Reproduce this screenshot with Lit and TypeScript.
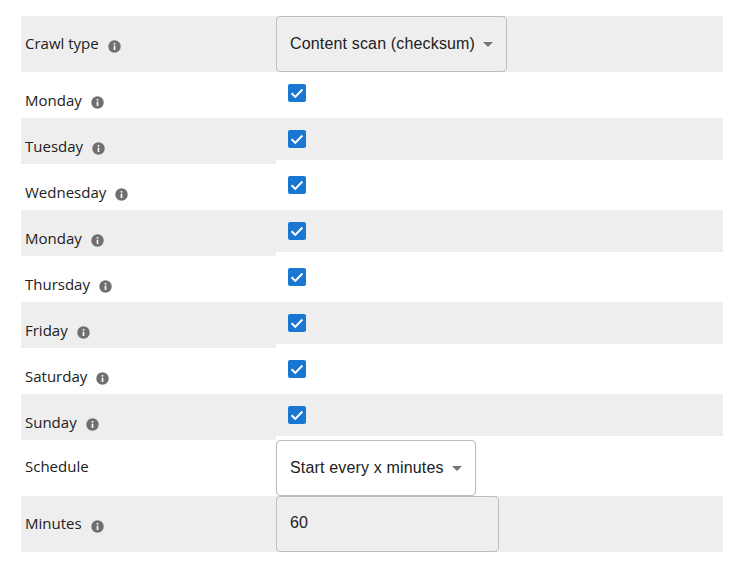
import { LitElement, html, css, svg } from 'lit';
import { customElement } from 'lit/decorators.js';

const DAYS = ['Monday', 'Tuesday', 'Wednesday', 'Monday', 'Thursday', 'Friday', 'Saturday', 'Sunday'];

const infoIcon = html`<svg class="info" viewBox="0 0 24 24" width="13" height="13">
  <circle cx="12" cy="12" r="11.5" fill="#6f6f6f"></circle>
  ${svg`<rect x="10.5" y="10.5" width="3" height="8" fill="#fff"></rect>
  <rect x="10.5" y="5.5" width="3" height="3" fill="#fff"></rect>`}
</svg>`;

@customElement('app-root')
export class AppRoot extends LitElement {
  static styles = css`
    :host {
      display: block;
      padding: 16px 27px 23px 21px;
      background: #fff;
      font-family: 'Open Sans', 'Noto Sans', sans-serif;
      color: #212121;
    }
    .row {
      display: grid;
      grid-template-columns: 255px 1fr;
      align-items: start;
    }
    .label {
      display: flex;
      align-items: center;
      padding-left: 4px;
      box-sizing: border-box;
      font-size: 15px;
    }
    .tall .label { height: 56px; padding-bottom: 2px; }
    .tall.plain .label { padding-bottom: 4px; }
    .day .label { height: 46px; padding-top: 10px; }
    .info { margin-left: 9px; margin-top: 4px; flex: none; }
    .tall .info { margin-top: 6px; }
    .control { display: flex; }
    .day .control { height: 42px; padding: 12px; box-sizing: border-box; }
    .tall .control { height: 56px; }
    .shaded .label, .shaded .control { background: #eee; }
    .box {
      width: 18px;
      height: 18px;
      border-radius: 2px;
      background: #1976d2;
      display: block;
    }
    .field {
      display: flex;
      align-items: center;
      box-sizing: border-box;
      height: 56px;
      padding: 0 13px;
      border: 1px solid #bdbdbd;
      border-radius: 4px;
      font-family: 'Liberation Sans', Arial, sans-serif;
      font-size: 16px;
      letter-spacing: 0.16px;
      white-space: nowrap;
      color: #212121;
    }
    .select .caret {
      flex: none;
      width: 0;
      height: 0;
      margin-left: 8px;
      border-left: 5px solid transparent;
      border-right: 5px solid transparent;
      border-top: 5px solid #757575;
      margin-top: 1px;
    }
    .wide { width: 231px; }
    .mid { width: 200px; }
    .num { width: 223px; padding-bottom: 2px; }
  `;

  private renderDay(name: string, i: number) {
    return html`<div class="row day ${i % 2 === 1 ? 'shaded' : ''}">
      <div class="label">${name}${infoIcon}</div>
      <div class="control">
        <svg class="box" viewBox="0 0 18 18">
          <path d="M3.6 9.2l3.7 3.7 7.1-7.4" fill="none" stroke="#fff" stroke-width="2"></path>
        </svg>
      </div>
    </div>`;
  }

  render() {
    return html`
      <div class="row tall shaded">
        <div class="label">Crawl type${infoIcon}</div>
        <div class="control">
          <div class="field select wide">Content scan (checksum)<span class="caret"></span></div>
        </div>
      </div>
      ${DAYS.map((d, i) => this.renderDay(d, i))}
      <div class="row tall plain">
        <div class="label">Schedule</div>
        <div class="control">
          <div class="field select mid">Start every x minutes<span class="caret"></span></div>
        </div>
      </div>
      <div class="row tall shaded">
        <div class="label">Minutes${infoIcon}</div>
        <div class="control">
          <div class="field num">60</div>
        </div>
      </div>
    `;
  }
}
